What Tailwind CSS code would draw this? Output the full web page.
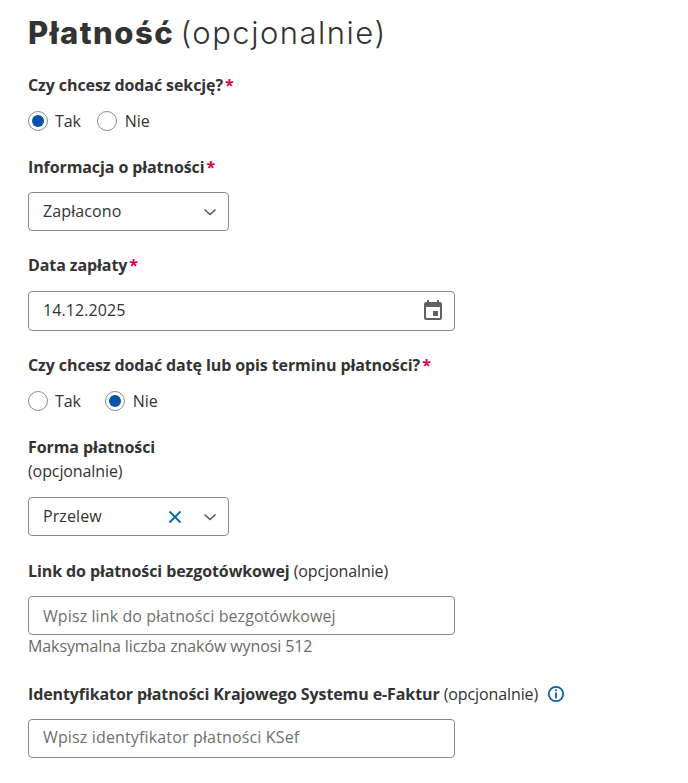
<!doctype html>
<html lang="pl"><head><meta charset="utf-8"><script src="https://cdn.jsdelivr.net/npm/@tailwindcss/browser@4"></script></head>
<body class="bg-white overflow-hidden">
<div class="w-[688px] h-[783px] overflow-hidden pl-[28px] pt-[13px] font-['Open_Sans',sans-serif] text-[16px] leading-[24px] text-[#333] tracking-[-0.1px]">
  <h1 class="font-['Inter',sans-serif] text-[31px] leading-[40px] text-[#333] tracking-[1.5px] [word-spacing:-4px]"><span class="font-extrabold">Płatność</span> <span class="font-light">(opcjonalnie)</span></h1>

  <div class="mt-[20px] font-bold">Czy chcesz dodać sekcję?<span class="text-[#d6004f] ml-[2px]">*</span></div>
  <div class="mt-[12px] flex items-center h-[24px]">
    <span class="w-[20px] h-[20px] rounded-full border border-[#8a8a8a] flex items-center justify-center"><span class="w-[12px] h-[12px] rounded-full bg-[#0353a8]"></span></span><span class="ml-[7px] mt-[-1px]">Tak</span>
    <span class="ml-[16px] w-[20px] h-[20px] rounded-full border border-[#8a8a8a]"></span><span class="ml-[8px] mt-[-1px]">Nie</span>
  </div>

  <div class="mt-[22px] font-bold">Informacja o płatności<span class="text-[#d6004f] ml-[2px]">*</span></div>
  <div class="mt-[13px] w-[201px] h-[39px] border border-[#8a8a8a] rounded-[4px] flex items-center pl-[14px] pr-[11px] justify-between">
    <span class="mt-[-2px] tracking-[0.1px]">Zapłacono</span>
    <svg width="14" height="8" viewBox="0 0 14 8" fill="none" stroke="#555" stroke-width="1.6"><path d="M1.5 1.5 7 6.5l5.500-5"/></svg>
  </div>

  <div class="mt-[22px] font-bold">Data zapłaty<span class="text-[#d6004f] ml-[2px]">*</span></div>
  <div class="mt-[14px] w-[427px] h-[40px] border border-[#8a8a8a] rounded-[4px] flex items-center pl-[14px] pr-[11px] justify-between">
    <span class="mt-[-2px] tracking-[0.1px]">14.12.2025</span>
    <svg width="20" height="22" viewBox="0 0 20 22" fill="#616161" class="mt-[-2px]"><path d="M4 1h2v2h8V1h2v2h1a2 2 0 0 1 2 2v14a2 2 0 0 1-2 2H3a2 2 0 0 1-2-2V5a2 2 0 0 1 2-2h1V1Zm-1 7v11h14V8H3Z"/><rect x="10" y="12" width="5" height="5"/></svg>
  </div>

  <div class="mt-[22px] font-bold">Czy chcesz dodać datę lub opis terminu płatności?<span class="text-[#d6004f] ml-[2px]">*</span></div>
  <div class="mt-[12px] flex items-center h-[24px]">
    <span class="w-[20px] h-[20px] rounded-full border border-[#8a8a8a]"></span><span class="ml-[7px]">Tak</span>
    <span class="ml-[24px] w-[20px] h-[20px] rounded-full border border-[#8a8a8a] flex items-center justify-center"><span class="w-[12px] h-[12px] rounded-full bg-[#0353a8]"></span></span><span class="ml-[8px]">Nie</span>
  </div>

  <div class="mt-[22px] font-bold">Forma płatności</div>
  <div>(opcjonalnie)</div>
  <div class="mt-[14px] w-[201px] h-[39px] border border-[#8a8a8a] rounded-[4px] flex items-center pl-[14px] pr-[11px]">
    <span class="flex-1 mt-[-1px] tracking-[0.1px]">Przelew</span>
    <svg width="14" height="14" viewBox="0 0 14 14" fill="none" stroke="#0a66b0" stroke-width="1.800" class="mr-[21px]"><path d="m1.500 1.500 11 11M12.500 1.500l-11 11"/></svg>
    <svg width="14" height="8" viewBox="0 0 14 8" fill="none" stroke="#555" stroke-width="1.6"><path d="M1.5 1.5 7 6.5l5.500-5"/></svg>
  </div>

  <div class="mt-[23px]"><span class="font-bold">Link do płatności bezgotówkowej</span> (opcjonalnie)</div>
  <div class="mt-[13px] w-[427px] h-[39px] border border-[#8a8a8a] rounded-[4px] flex items-center px-[14px] text-[#6f6f6f] tracking-[0.1px]"><span>Wpisz link do płatności bezgotówkowej</span></div>
  <div class="mt-[-1px] text-[#6a6a6a]">Maksymalna liczba znaków wynosi 512</div>

  <div class="mt-[24px] flex items-center"><span class="font-bold">Identyfikator płatności Krajowego Systemu e-Faktur</span>&nbsp;(opcjonalnie)
    <svg width="18" height="18" viewBox="0 0 18 18" fill="none" class="ml-[9px]"><circle cx="9" cy="9" r="7.2" stroke="#0a5cad" stroke-width="1.700"/><rect x="8.100" y="4.300" width="1.800" height="1.900" fill="#0a5cad"/><rect x="8.100" y="7.500" width="1.800" height="6" fill="#0a5cad"/></svg>
  </div>
  <div class="mt-[13px] w-[427px] h-[39px] border border-[#8a8a8a] rounded-[4px] flex items-center px-[14px] text-[#6f6f6f] tracking-[0.15px]"><span class="mt-[-3px]">Wpisz identyfikator płatności KSef</span></div>
</div>
</body></html>
